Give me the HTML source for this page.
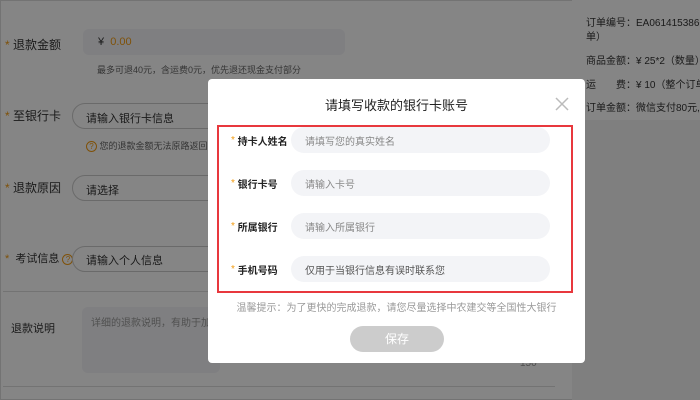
<!DOCTYPE html>
<html><head><meta charset="utf-8"><style>
*{margin:0;padding:0;box-sizing:border-box}
body{width:700px;height:400px;overflow:hidden;position:relative;background:#fff;font-family:"Liberation Sans","Noto Sans CJK SC",sans-serif;color:#333;font-size:11px}
.a{position:absolute;white-space:nowrap}
.st{color:#f39c12;font-weight:normal}
.pill{position:absolute;border:1px solid #ccc;border-radius:14px;background:#fff}
.ov{position:absolute;left:0;top:0;width:700px;height:400px;background:rgba(0,0,0,0.48)}
.inp{position:absolute;left:291px;width:259px;height:26px;border-radius:13px;background:#f3f4f7;color:#888;font-size:10px;display:flex;align-items:center;padding-left:14px}
.lb{position:absolute;left:231px;font-size:10px;font-weight:bold;color:#222;height:26px;display:flex;align-items:center}
</style></head><body>
<div class="a" style="left:0;top:0;width:700px;height:400px;border:1px solid #ddd"></div>
<div class="a" style="left:572px;top:0;width:128px;height:120px;background:#fff"></div>
<div class="a" style="left:572px;top:120px;width:128px;height:280px;background:#f4f4f4"></div>
<div class="a" style="left:5px;top:36px;font-size:12px"><span class="st">* </span>退款金额</div>
<div class="a" style="left:83px;top:29px;width:262px;height:26px;background:#f3f4f7;border-radius:6px"></div>
<div class="a" style="left:98px;top:36px;font-size:11px">¥ &nbsp;<span style="color:#f39c12">0.00</span></div>
<div class="a" style="left:97px;top:63px;font-size:9px;color:#666">最多可退40元，含运费0元，优先退还现金支付部分</div>
<div class="a" style="left:5px;top:107px;font-size:12px"><span class="st">* </span>至银行卡</div>
<div class="pill" style="left:72px;top:103px;width:300px;height:26px"></div>
<div class="a" style="left:86px;top:110px;font-size:11px">请输入银行卡信息</div>
<div class="a" style="left:86px;top:139px;font-size:9px;color:#666"><span style="display:inline-block;width:11px;height:11px;border:1px solid #f39c12;border-radius:50%;color:#f39c12;text-align:center;line-height:9px;font-size:8px">?</span> 您的退款金额无法原路返回，需</div>
<div class="a" style="left:5px;top:179px;font-size:12px"><span class="st">* </span>退款原因</div>
<div class="pill" style="left:72px;top:175px;width:300px;height:26px"></div>
<div class="a" style="left:86px;top:182px;font-size:11px">请选择</div>
<div class="a" style="left:5px;top:250px;font-size:11px"><span class="st">* </span>&nbsp;考试信息 <span style="display:inline-block;width:11px;height:11px;border:1px solid #f39c12;border-radius:50%;color:#f39c12;text-align:center;line-height:9px;font-size:8px">?</span></div>
<div class="pill" style="left:72px;top:246px;width:300px;height:26px"></div>
<div class="a" style="left:86px;top:252px;font-size:11px">请输入个人信息</div>
<div class="a" style="left:3px;top:291px;width:552px;height:1px;background:#ddd"></div>
<div class="a" style="left:11px;top:320px;font-size:11px">退款说明</div>
<div class="a" style="left:82px;top:307px;width:138px;height:66px;background:#f3f4f7;border-radius:6px"></div>
<div class="a" style="left:91px;top:314px;font-size:10px;color:#999">详细的退款说明，有助于加快</div>
<div class="a" style="left:520px;top:358px;font-size:10px;color:#999">150</div>
<div class="a" style="left:3px;top:386px;width:552px;height:1px;background:#ddd"></div>
<div class="a" style="left:586px;top:17px;font-size:10px;line-height:14px">订单编号：EA06141538668<br>单）</div>
<div class="a" style="left:586px;top:52px;font-size:10px">商品金额：¥ 25*2（数量）</div>
<div class="a" style="left:586px;top:76px;font-size:10px">运　　费：¥ 10（整个订单</div>
<div class="a" style="left:586px;top:99px;font-size:10px">订单金额：微信支付80元,</div>
<div class="ov"></div>
<div class="a" style="left:208px;top:79px;width:377px;height:284px;background:#fff;border-radius:4px"></div>
<div class="a" style="left:208px;top:95px;width:377px;text-align:center;font-size:13px;color:#222">请填写收款的银行卡账号</div>
<svg class="a" style="left:555px;top:97px" width="14" height="14"><path d="M1 1L13 13M13 1L1 13" stroke="#bbb" stroke-width="1.5"/></svg>
<div class="a" style="left:217px;top:125px;width:356px;height:168px;border:2px solid #e8383d"></div>
<div class="lb" style="top:127px"><span class="st">*&nbsp;</span>持卡人姓名</div>
<div class="inp" style="top:127px">请填写您的真实姓名</div>
<div class="lb" style="top:170px"><span class="st">*&nbsp;</span>银行卡号</div>
<div class="inp" style="top:170px">请输入卡号</div>
<div class="lb" style="top:213px"><span class="st">*&nbsp;</span>所属银行</div>
<div class="inp" style="top:213px">请输入所属银行</div>
<div class="lb" style="top:256px"><span class="st">*&nbsp;</span>手机号码</div>
<div class="inp" style="top:256px;color:#555">仅用于当银行信息有误时联系您</div>
<div class="a" style="left:208px;top:299px;width:377px;text-align:center;font-size:10px;color:#999">温馨提示：为了更快的完成退款，请您尽量选择中农建交等全国性大银行</div>
<div class="a" style="left:350px;top:326px;width:94px;height:26px;border-radius:13px;background:#ccc;color:#fff;text-align:center;line-height:26px;font-size:12px">保存</div>
</body></html>
